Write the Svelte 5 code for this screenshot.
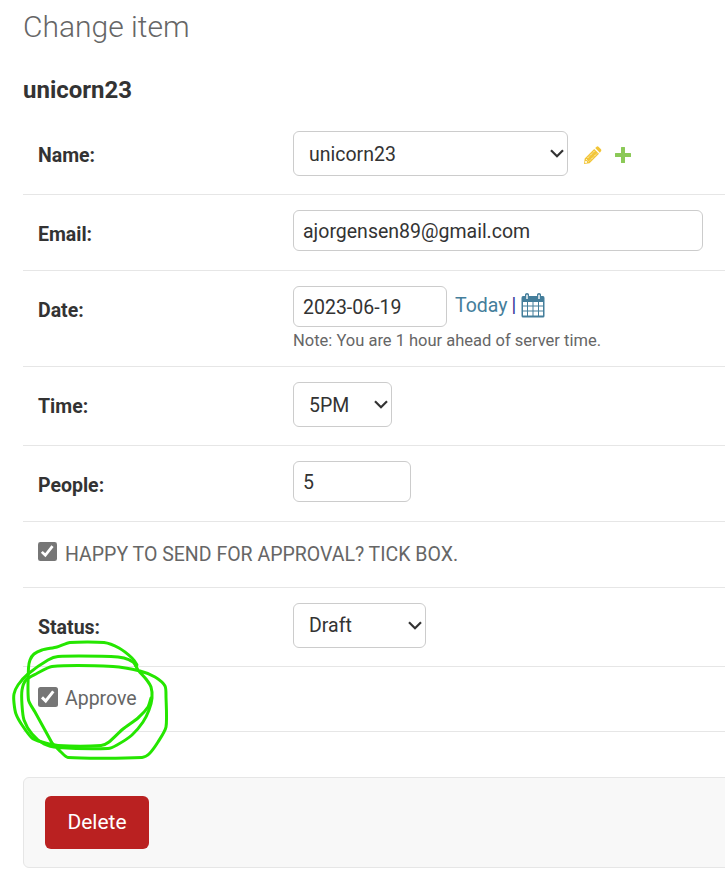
<script>
  const strokes = [
    [[52,743],[46,732],[35,712],[28.5,700],[28.5,668],[30,660],[34,654],[42,650],[57,647],[70,642.5],[104,642.5],[119,648],[132,658],[137,665],[136,666]],
    [[136,666],[138,670],[146,679],[151,687],[152,698],[149,710],[143,722],[132,735],[117,745],[108,748.5],[58,747.5],[44,744],[32,734],[24,720],[22,705],[22,690],[26,680],[36,674],[52,666.5],[113,666.5],[140,671],[155,677],[165,686],[166,697],[166,727],[158,742],[149,754],[142,757.5],[68,757.5],[61,752],[52,743]],
    [[136,666],[133,662],[124,658],[111,656.5],[58,656.5],[48,660],[28,674],[18,685],[14,694],[14,703],[16,714],[22,725],[32,738],[42,742],[58,745.5],[101,745.5],[109,742],[123,729],[138,718],[148,707],[151,698]]
  ];
  // Catmull-Rom spline through the points of a pen stroke
  function smooth(p) {
    let d = `M${p[0]}`;
    for (let i = 0; i < p.length - 1; i++) {
      const a = p[i - 1] ?? p[i], b = p[i], c = p[i + 1], e = p[i + 2] ?? c;
      const len = Math.hypot(c[0] - b[0], c[1] - b[1]);
      const h1 = len / (3 * (Math.hypot(c[0] - a[0], c[1] - a[1]) || 1));
      const h2 = len / (3 * (Math.hypot(e[0] - b[0], e[1] - b[1]) || 1));
      d += `C${b[0] + (c[0] - a[0]) * h1 * .7} ${b[1] + (c[1] - a[1]) * h1 * .7} ${c[0] - (e[0] - b[0]) * h2 * .7} ${c[1] - (e[1] - b[1]) * h2 * .7} ${c[0]} ${c[1]}`;
    }
    return d;
  }
</script>

{#snippet choice(id, value, width)}
  <div class="select-wrap" style:width="{width}px">
    <select {id}><option>{value}</option></select>
    <svg width="14" height="9" viewBox="0 0 14 9"><path d="M1 1.200L7 7.200L13 1.200" fill="none" stroke="#333" stroke-width="2.200" /></svg>
  </div>
{/snippet}

{#snippet check(label, size)}
  <label class="check">
    <input type="checkbox" checked />
    <span class="box"><svg width={size} height={size} viewBox="0 0 20 20"><rect width="20" height="20" rx="2.500" fill="#767676" /><path d="M4 10.400L7.700 14L15.300 4.300" fill="none" stroke="#fff" stroke-width="2.900" /></svg></span>
    <span class="caption">{label}</span>
  </label>
{/snippet}

<main>
  <h1>Change item</h1>
  <h2>unicorn23</h2>
  <form>
    <div class="row tall">
      <label class="name" for="name">Name:</label>
      {@render choice('name', 'unicorn23', 275)}
      <svg class="edit" width="19" height="19" viewBox="0 0 19 19">
        <path fill="#efb80b" opacity=".82" d="M1 18L1.700 12.500L11.200 3L16 7.800L6.500 17.300ZM12.200 2L13.600.7Q14.500 0 15.500.8L18 3.300Q18.800 4.200 18 5.200L16.800 6.700Z" />
        <path d="M3 13L6 16.200M4.500 12L12 4.500M7 14.500L14.500 7" fill="none" stroke="#fff" stroke-width=".8" stroke-dasharray="1.300 .8" />
        <circle cx="3" cy="16" r="1.100" fill="#fff" />
      </svg>
      <svg class="add" width="16" height="16" viewBox="0 0 16 16"><path fill="#8bc957" d="M6.500 0H9.500Q10 0 10 .5V6H15.500Q16 6 16 6.500V9.500Q16 10 15.500 10H10V15.500Q10 16 9.500 16H6.500Q6 16 6 15.500V10H.5Q0 10 0 9.500V6.500Q0 6 .5 6H6V.5Q6 0 6.500 0Z" /></svg>
    </div>
    <div class="row field">
      <label class="name" for="email">Email:</label>
      <input class="text" id="email" value="ajorgensen89@gmail.com" style:width="410px" />
    </div>
    <div class="row date">
      <label class="name" for="date">Date:</label>
      <div>
        <div class="date-line">
          <input class="text" id="date" value="2023-06-19" style:width="154px" />
          <span class="shortcuts"><a href="#today">Today</a><i>|</i></span>
          <svg class="calendar" width="24" height="25" viewBox="0 0 24 25">
            <path fill="#447e9b" d="M2 3H4V1.500Q4 0 6 0T8 1.500V3H16V1.500Q16 0 18 0T20 1.500V3H22Q23.500 3 23.500 5V23Q23.500 24.500 22 24.500H2Q.5 24.500.5 23V5Q.5 3 2 3Z" />
            <path fill="#fff" d="M5.300 2Q6 1 6.700 2V6H5.300ZM17.300 2Q18 1 18.700 2V6H17.300ZM2 9H6V12.500H2ZM7 9H11.500V12.500H7ZM12.500 9H17V12.500H12.500ZM18 9H22V12.500H18ZM2 13.500H6V17.500H2ZM7 13.500H11.500V17.500H7ZM12.500 13.500H17V17.500H12.500ZM18 13.500H22V17.500H18ZM2 18.500H6V22.500H2ZM7 18.500H11.500V22.500H7ZM12.500 18.500H17V22.500H12.500ZM18 18.500H22V22.500H18Z" />
          </svg>
        </div>
        <p>Note: You are 1 hour ahead of server time.</p>
      </div>
    </div>
    <div class="row tall">
      <label class="name" for="time">Time:</label>
      {@render choice('time', '5PM', 99)}
    </div>
    <div class="row field">
      <label class="name" for="people">People:</label>
      <input class="text" id="people" value="5" style:width="118px" />
    </div>
    <div class="row happy">{@render check('HAPPY TO SEND FOR APPROVAL? TICK BOX.', 19)}</div>
    <div class="row tall status">
      <label class="name" for="status">Status:</label>
      {@render choice('status', 'Draft', 133)}
    </div>
    <div class="row approve">{@render check('Approve', 20)}</div>
    <div class="submit"><button type="button">Delete</button></div>
  </form>
  <svg class="marks" width="180" height="130" viewBox="0 635 180 130">
    {#each strokes as points}<path d={smooth(points)} />{/each}
  </svg>
</main>

<style>
  :global(body) { margin: 0; background: #fff; }
  * { box-sizing: border-box; }
  main {
    position: relative;
    width: 725px;
    height: 886px;
    overflow: hidden;
    padding: 9px 0 0 23px;
    color: #666;
    font: 19.5px/24px Roboto, sans-serif;
  }
  h1 { margin: 0; height: 66px; font-size: 30px; line-height: 36px; font-weight: 300; }
  h2 { margin: 0; height: 41px; font-size: 24px; line-height: 30px; font-weight: 700; color: #333; }
  .row { display: flex; align-items: flex-start; padding: 15px 0 0 15px; border-bottom: 1px solid #e6e6e6; }
  .tall { height: 79px; }
  .field { height: 76px; }
  .date { height: 96px; }
  .happy { height: 66px; }
  .approve { height: 65px; }
  .name { width: 255px; flex: none; padding-top: 13px; font-weight: 700; color: #333; }
  .select-wrap { position: relative; height: 45px; flex: none; }
  select, .text { margin: 0; border: 1px solid #ccc; border-radius: 6px; background: #fff; color: #333; font: inherit; outline: none; }
  select { appearance: none; width: 100%; height: 45px; padding: 2px 30px 0 15px; }
  .status select { padding-top: 0; }
  .select-wrap svg { position: absolute; right: 4px; top: 18px; }
  .text { height: 41px; padding: 2px 9px 0; }
  .edit { margin: 15px 0 0 15px; }
  .add { margin: 16px 0 0 13px; }
  .date-line { display: flex; }
  .shortcuts { display: flex; gap: 4px; margin: 8px 0 0 8px; }
  a { color: #447e9b; text-decoration: none; }
  i { font-style: normal; color: #333399; }
  .calendar { margin: 7px 0 0 5px; }
  p { margin: 3px 0 0; font-size: 16.5px; line-height: 21px; }
  .check { display: flex; }
  .check input { position: absolute; opacity: 0; }
  .check .box { display: flex; width: 27px; padding-top: 5px; }
  .caption { margin-top: 5px; }
  .happy .caption { margin-top: 6px; }
  .submit { margin-top: 45px; height: 91px; width: 730px; padding: 18px 21px; background: #f8f8f8; border: 1px solid #e6e6e6; border-radius: 6px; }
  button { display: block; width: 104px; height: 53px; padding: 0 0 2px; border: 0; border-radius: 6px; background: #ba2121; color: #fff; font: 21px Roboto, sans-serif; }
  .marks { position: absolute; left: 0; top: 635px; pointer-events: none; }
  .marks path { fill: none; stroke: #25e600; stroke-width: 3; stroke-linejoin: round; stroke-linecap: round; }
</style>
